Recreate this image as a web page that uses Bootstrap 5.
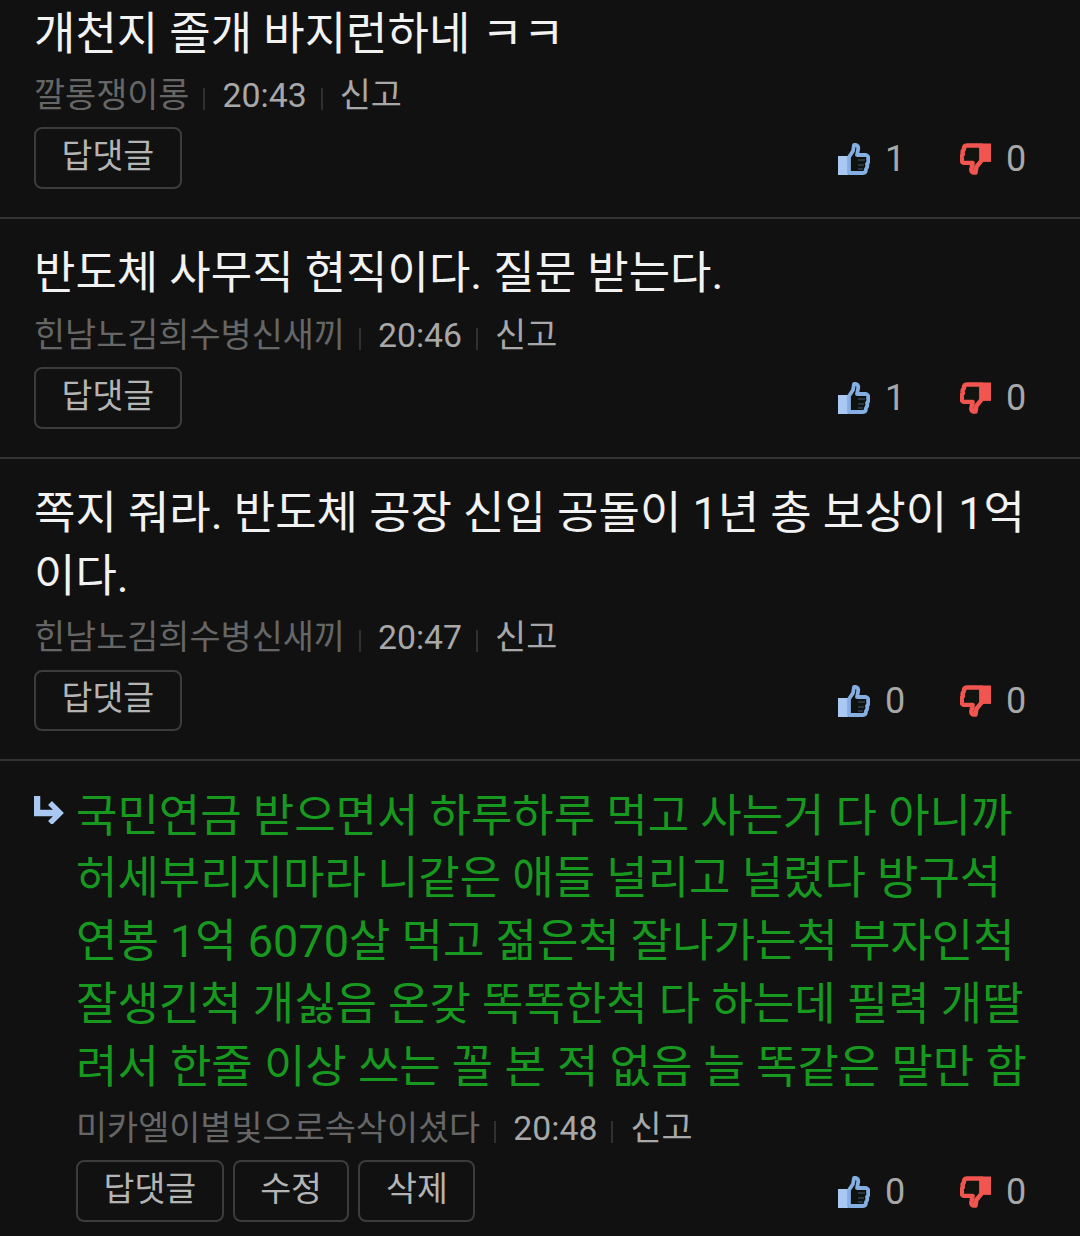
<!DOCTYPE html>
<html lang="ko">
<head>
<meta charset="UTF-8">
<title>댓글</title>
<link href="https://cdn.jsdelivr.net/npm/bootstrap@5.3.3/dist/css/bootstrap.min.css" rel="stylesheet">
<style>
html, body { background: #111112; height: 1236px; overflow: hidden; }
body { font-family: Roboto, "Noto Sans CJK KR", sans-serif; color: #eee; }
.reply-list { margin-top: -21px; }
.reply-item { padding: 24.5px 34px 28px 34px; border-bottom: 2px solid #333; }
.reply-item:last-child { border-bottom: 0; }
.reply-body { font-size: 45px; line-height: 62.75px; color: #f2f2f2; }
.reply-green { color: #17981f; }
.reply-meta { font-size: 33.8px; line-height: 46px; color: #a8a8a8; margin-top: 6.5px; margin-bottom: 8.5px; }
.reply-nick { color: #666; }
.reply-sep { width: 2px; height: 22px; background: #303030; margin: 6px 17px 0 14px; }
.reply-btn { font-size: 33.6px; line-height: 44px; color: #b4b4b4; border: 2px solid #3c3c3c; border-radius: 8px; background: transparent; padding: 0 25.5px 2px; height: 61.5px; }
.reply-btns { gap: 9px; }
.vote-group { margin-right: 20px; padding-top: 1px; }
.vote-num { font-size: 36px; color: #a8a8a8; line-height: 44px; width: 20px; margin-left: 15px; }
.vote-box { width: 122px; }
.vote-box:last-child { width: 66px; }
.reply-arrow { width: 42px; flex: none; padding-top: 10px; }
</style>
</head>
<body>
<svg width="0" height="0" class="position-absolute">
  <symbol id="thumb-up" viewBox="0 0 32 32">
    <path d="M0 13h10v19H0z" fill="#a9c8f2"/>
    <path d="M11 14L15 8 16 2H18Q21 3 20 7L19 12H28Q31 13 30 16 31 19 29 21 30 24 28 26 28 30 25 30H11Z" fill="#0f120f" stroke="#85aee2" stroke-width="3.8" stroke-linejoin="round"/>
    <path d="M20 17h7M20 22h6M20 26h5" stroke="#85aee2" stroke-width="1.2" opacity=".45"/>
  </symbol>
  <symbol id="thumb-down" viewBox="0 0 32 32">
    <g transform="rotate(180 16 16)">
      <path d="M0 13h10v19H0z" fill="#f0564f"/>
      <path d="M10 14L15 8 16 2H18Q21 3 20 7L19 12H28Q31 13 30 16 31 19 29 21 30 24 28 26 28 30 25 30H10Z" fill="#12140f" stroke="#f0564f" stroke-width="4.6" stroke-linejoin="round"/>
    </g>
  </symbol>
</svg>

<div class="reply-list">
  <div class="reply-item">
    <div class="reply-body">개천지 졸개 바지런하네 ㅋㅋ</div>
    <div class="reply-meta d-flex align-items-center"><span class="reply-nick">깔롱쟁이롱</span><i class="reply-sep"></i><span>20:43</span><i class="reply-sep"></i><span>신고</span></div>
    <div class="d-flex justify-content-between align-items-center">
      <div class="d-flex reply-btns"><button type="button" class="btn reply-btn">답댓글</button></div>
      <div class="d-flex vote-group">
        <div class="vote-box d-flex align-items-center"><svg width="32" height="32"><use href="#thumb-up"/></svg><span class="vote-num">1</span></div>
        <div class="vote-box d-flex align-items-center"><svg width="33" height="32"><use href="#thumb-down"/></svg><span class="vote-num">0</span></div>
      </div>
    </div>
  </div>
  <div class="reply-item">
    <div class="reply-body">반도체 사무직 현직이다. 질문 받는다.</div>
    <div class="reply-meta d-flex align-items-center"><span class="reply-nick">힌남노김희수병신새끼</span><i class="reply-sep"></i><span>20:46</span><i class="reply-sep"></i><span>신고</span></div>
    <div class="d-flex justify-content-between align-items-center">
      <div class="d-flex reply-btns"><button type="button" class="btn reply-btn">답댓글</button></div>
      <div class="d-flex vote-group">
        <div class="vote-box d-flex align-items-center"><svg width="32" height="32"><use href="#thumb-up"/></svg><span class="vote-num">1</span></div>
        <div class="vote-box d-flex align-items-center"><svg width="33" height="32"><use href="#thumb-down"/></svg><span class="vote-num">0</span></div>
      </div>
    </div>
  </div>
  <div class="reply-item">
    <div class="reply-body">쪽지 줘라. 반도체 공장 신입 공돌이 1년 총 보상이 1억<br>이다.</div>
    <div class="reply-meta d-flex align-items-center"><span class="reply-nick">힌남노김희수병신새끼</span><i class="reply-sep"></i><span>20:47</span><i class="reply-sep"></i><span>신고</span></div>
    <div class="d-flex justify-content-between align-items-center">
      <div class="d-flex reply-btns"><button type="button" class="btn reply-btn">답댓글</button></div>
      <div class="d-flex vote-group">
        <div class="vote-box d-flex align-items-center"><svg width="32" height="32"><use href="#thumb-up"/></svg><span class="vote-num">0</span></div>
        <div class="vote-box d-flex align-items-center"><svg width="33" height="32"><use href="#thumb-down"/></svg><span class="vote-num">0</span></div>
      </div>
    </div>
  </div>
  <div class="reply-item d-flex">
    <div class="reply-arrow"><svg width="30" height="28" viewBox="0 0 30 28"><path d="M3 0v17h20" fill="none" stroke="#a9c8f2" stroke-width="6.5"/><path d="M16 7l10 10-10 10" fill="none" stroke="#a9c8f2" stroke-width="5.5"/></svg></div>
    <div class="flex-grow-1">
      <div class="reply-body reply-green text-nowrap">국민연금 받으면서 하루하루 먹고 사는거 다 아니까<br>허세부리지마라 니같은 애들 널리고 널렸다 방구석<br>연봉 1억 6070살 먹고 젊은척 잘나가는척 부자인척<br>잘생긴척 개싫음 온갖 똑똑한척 다 하는데 필력 개딸<br>려서 한줄 이상 쓰는 꼴 본 적 없음 늘 똑같은 말만 함</div>
      <div class="reply-meta d-flex align-items-center"><span class="reply-nick">미카엘이별빛으로속삭이셨다</span><i class="reply-sep"></i><span>20:48</span><i class="reply-sep"></i><span>신고</span></div>
      <div class="d-flex justify-content-between align-items-center">
        <div class="d-flex reply-btns"><button type="button" class="btn reply-btn">답댓글</button><button type="button" class="btn reply-btn">수정</button><button type="button" class="btn reply-btn">삭제</button></div>
        <div class="d-flex vote-group">
          <div class="vote-box d-flex align-items-center"><svg width="32" height="32"><use href="#thumb-up"/></svg><span class="vote-num">0</span></div>
          <div class="vote-box d-flex align-items-center"><svg width="33" height="32"><use href="#thumb-down"/></svg><span class="vote-num">0</span></div>
        </div>
      </div>
    </div>
  </div>
</div>
<script src="https://cdn.jsdelivr.net/npm/bootstrap@5.3.3/dist/js/bootstrap.bundle.min.js"></script>
</body>
</html>
